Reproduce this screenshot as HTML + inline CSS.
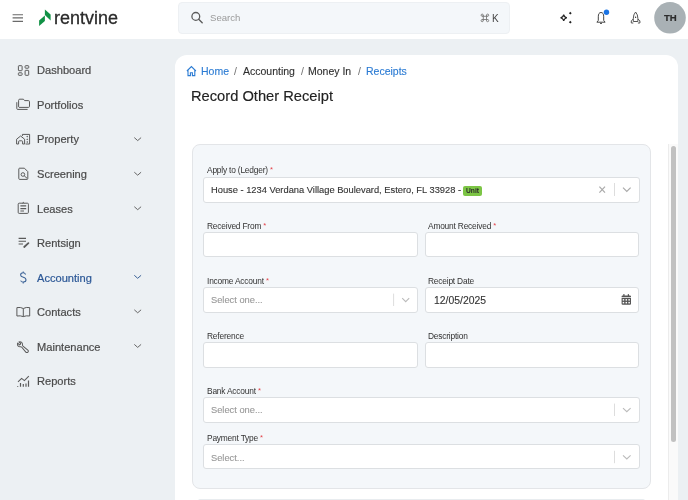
<!DOCTYPE html>
<html><head><meta charset="utf-8">
<style>
*{margin:0;padding:0;box-sizing:border-box}
html,body{width:688px;height:500px;overflow:hidden}
body{background:#ecf0f3;font-family:"Liberation Sans",sans-serif;position:relative;color:#333}
.a{position:absolute;white-space:nowrap;line-height:1}
.nav,.a,.lbl,.txt{will-change:transform;z-index:4}
#hdr{position:absolute;left:0;top:0;width:688px;height:39px;background:#fff}
#search{position:absolute;left:178.3px;top:2px;width:331.7px;height:31.8px;background:#f4f7fa;border:1px solid #edf0f3;border-radius:4px}
.nav{position:absolute;left:36.6px;font-size:11.1px;line-height:1;color:#4a4a4a;-webkit-text-stroke:0.2px #4a4a4a}
.ico{position:absolute;left:0;top:0;z-index:3}
.chev{position:absolute;left:134px}
#card{position:absolute;left:175px;top:55px;width:503px;height:460px;background:#fff;border-radius:12px 12px 0 0}
#panel{position:absolute;left:192px;top:144.3px;width:459px;height:344.7px;background:#f4f7fa;border:1px solid #e3e5e8;border-radius:8px}
.inp{position:absolute;background:#fff;border:1px solid #dcdfe2;border-radius:3px;height:25.3px}
.lbl{position:absolute;font-size:8.4px;letter-spacing:-0.2px;line-height:1;color:#333;white-space:nowrap}
.lbl i{font-style:normal;color:#e3434a;font-size:7.6px;position:relative;top:-0.6px}
.txt{position:absolute;font-size:10px;line-height:1;white-space:nowrap;-webkit-text-stroke:0.12px currentColor}
</style></head><body>
<div id="hdr"></div>
<!-- hamburger -->
<svg class="ico" width="40" height="39" style="left:0;top:0">
<path d="M12.6 14.7H23M12.6 17.9H23M12.6 21.3H23" stroke="#6a6a6a" stroke-width="1.15"/>
</svg>
<!-- logo leaf -->
<svg class="ico" width="60" height="39">
<path d="M44.9 9.6L50.6 14.4L50.6 20.4L44.9 15.1Z" fill="#119145"/>
<path d="M44.9 15.4L44.9 20.9L39.1 25.9L39.1 20.6Z" fill="#119145"/>
</svg>
<div class="a" style="left:53.8px;top:9.2px;font-size:18px;color:#2b2b2b;transform:scaleY(1.04);transform-origin:0 15px;-webkit-text-stroke:0.3px #2b2b2b">rentvine</div>
<div id="search"></div>
<svg class="ico" width="688" height="39">
<circle cx="195.8" cy="16.4" r="3.9" fill="none" stroke="#5c5c5c" stroke-width="1.3"/>
<path d="M198.7 19.3L202.2 22.7" stroke="#5c5c5c" stroke-width="1.4" stroke-linecap="round"/>
</svg>
<div class="a" style="left:210.3px;top:12.9px;font-size:9.6px;color:#9a9a9a">Search</div>
<svg class="ico" width="688" height="39" fill="none" stroke="#7a7a7a" stroke-width="0.9">
<path d="M483.3 15.2V20.6M486.5 15.2V20.6M482.2 16.3H487.6M482.2 19.5H487.6"/>
<circle cx="482.2" cy="15.2" r="1.1"/><circle cx="487.6" cy="15.2" r="1.1"/><circle cx="482.2" cy="20.6" r="1.1"/><circle cx="487.6" cy="20.6" r="1.1"/>
</svg>
<div class="a" style="left:492.3px;top:14px;font-size:10px;color:#444">K</div>
<!-- right icons -->
<svg class="ico" width="688" height="39">
<path d="M563.7 14.6Q564.2 17.3 566.9 17.8Q564.2 18.3 563.7 21Q563.2 18.3 560.5 17.8Q563.2 17.3 563.7 14.6Z" fill="none" stroke="#222" stroke-width="1.1"/>
<path d="M570.3 11.8L571.7 13.2L570.3 14.6L568.9 13.2Z" fill="#222"/>
<path d="M570.3 20.8L571.7 22.2L570.3 23.6L568.9 22.2Z" fill="#222"/>
<path d="M598.3 20.4V16.8Q598.3 12.5 601 12.5Q603.7 12.5 603.7 16.8V20.4L605.1 22.2H596.9Z" fill="none" stroke="#444" stroke-width="1" stroke-linejoin="round"/>
<path d="M600 23.1Q601 24.3 602 23.1" fill="none" stroke="#444" stroke-width="1"/>
<circle cx="606.5" cy="12.2" r="2.7" fill="#1b74e4"/>
<path d="M635.6 12Q633.3 14.5 633.3 18.5V21.5H637.9V18.5Q637.9 14.5 635.6 12Z" fill="none" stroke="#555" stroke-width="1"/>
<path d="M633.3 19L631.3 20.8V23H633.3M637.9 19L639.9 20.8V23H637.9" fill="none" stroke="#555" stroke-width="1"/>
<circle cx="635.6" cy="17.3" r="0.7" fill="#333"/>
<circle cx="670" cy="17.8" r="15.8" fill="#a9b1b5"/>
</svg>
<div class="a" style="left:663.6px;top:13px;font-size:9.6px;font-weight:bold;color:#2c2c2c;-webkit-text-stroke:0.2px #2c2c2c">TH</div>

<!-- sidebar -->
<svg class="ico" width="175" height="500" fill="none" stroke="#5a5a5a" stroke-width="1">
<!-- dashboard -->
<rect x="18.4" y="65.7" width="3.7" height="5" rx="0.6"/>
<rect x="25.1" y="65.7" width="3.6" height="2.5" rx="0.6"/>
<rect x="18.4" y="72.8" width="3.7" height="2.5" rx="0.6"/>
<rect x="25.1" y="70.3" width="3.6" height="5" rx="0.6"/>
<!-- portfolios -->
<path d="M18.6 106.9V100.4Q18.6 99.2 19.8 99.2H23.4L24.6 100.6H28.4Q29.5 100.6 29.5 101.7V106.3Q29.5 107.4 28.4 107.4H19.1Z"/>
<path d="M16.8 102.2V108.6Q16.8 109.4 17.6 109.4H27.6"/>
<!-- property -->
<path d="M16.6 144V139.2L20.6 136L24.6 139.2V144H22.6V141.6Q22.6 140.8 21.8 140.8H19.4Q18.6 140.8 18.6 141.6V144Z"/>
<path d="M22.4 136V134.4H29.6V144H25.6"/>
<circle cx="27.2" cy="136.6" r=".35" fill="#555"/><circle cx="27.2" cy="139.3" r=".35" fill="#555"/><circle cx="27.2" cy="142" r=".35" fill="#555"/>
<!-- screening -->
<path d="M24.4 168.2H19.6Q18.8 168.2 18.8 169V178.6Q18.8 179.4 19.6 179.4H27Q27.8 179.4 27.8 178.6V171.6Z"/>
<circle cx="22.9" cy="174.5" r="1.8"/>
<path d="M24.2 175.8L27.2 178.4"/>
<!-- leases -->
<rect x="18.2" y="203.2" width="10.2" height="10.2" rx="1"/>
<path d="M22.4 203.2Q23.3 201.6 24.2 203.2"/>
<path d="M20.4 205.8H26.2M20.4 208.6H26.2M20.4 211H24" stroke-width="1.2"/>
<!-- rentsign -->
<path d="M18.6 238.4H26M18.6 241.2H26M18.6 244H23" stroke-width="1.1"/>
<path d="M24.2 247L28.4 243.2" stroke-width="1.8" stroke-linecap="round"/>
<!-- contacts -->
<path d="M23.3 308.5Q20.5 306.9 16.9 307.6V316Q20.5 315.4 23.3 316.6Q26.1 315.4 29.7 316V307.6Q26.1 306.9 23.3 308.5ZM23.3 308.5V316.6"/>
<!-- maintenance -->
<g transform="translate(29.6,340.4) scale(-0.56,0.56)" stroke-width="1.8" stroke-linecap="round" stroke-linejoin="round"><path d="M21.75 6.75a4.5 4.5 0 0 1-4.884 4.484c-1.076-.091-2.264.071-2.95.904l-7.152 8.684a2.548 2.548 0 1 1-3.586-3.586l8.684-7.152c.833-.686.995-1.874.904-2.95a4.5 4.5 0 0 1 6.336-4.486l-3.276 3.276a3.004 3.004 0 0 0 2.25 2.25l3.276-3.276c.271.587.422 1.24.422 1.929Z"/></g>
<!-- reports -->
<path d="M18 381.8L21.6 378.4L24.4 380.6L28.8 376.2" stroke-width="1.1"/>
<path d="M17.7 386.8V386M20.5 386.8V383M23.3 386.8V384M26 386.8V383.5M28.5 386.8V380.5" stroke-width="1.2"/>
</svg>
<svg class="ico" width="175" height="500" fill="none" stroke="#3a6196" stroke-width="1.05">
<path d="M25.6 274.4Q24.8 272.8 23.1 272.8Q20.6 272.8 20.6 274.9Q20.6 276.6 23.3 277.3Q26 278 26 280.1Q26 282.1 23.3 282.1Q21.3 282.1 20.6 280.6M23.2 271.5V272.8M23.2 282.1V283.4"/>
</svg>
<svg class="ico" width="175" height="500" fill="none" stroke="#666" stroke-width="1">
<path d="M134.3 137.6L137.7 140.6L141.1 137.6"/>
<path d="M134.3 172.2L137.7 175.2L141.1 172.2"/>
<path d="M134.3 206.7L137.7 209.7L141.1 206.7"/>
<path d="M134.3 309.8L137.7 312.8L141.1 309.8"/>
<path d="M134.3 344.4L137.7 347.4L141.1 344.4"/>
</svg>
<svg class="ico" width="175" height="500" fill="none" stroke="#3a6196" stroke-width="1">
<path d="M134.3 275.3L137.7 278.3L141.1 275.3"/>
</svg>
<div class="nav" style="top:65.4px">Dashboard</div>
<div class="nav" style="top:99.9px">Portfolios</div>
<div class="nav" style="top:134.4px">Property</div>
<div class="nav" style="top:169.0px">Screening</div>
<div class="nav" style="top:203.6px">Leases</div>
<div class="nav" style="top:238.1px">Rentsign</div>
<div class="nav" style="top:272.7px;color:#2b5796;-webkit-text-stroke:0.2px #2b5796">Accounting</div>
<div class="nav" style="top:307.2px">Contacts</div>
<div class="nav" style="top:341.8px">Maintenance</div>
<div class="nav" style="top:376.3px">Reports</div>

<!-- card -->
<div id="card"></div>
<svg class="ico" width="688" height="500" fill="none" stroke="#2b7bd3" stroke-width="1.1">
<path d="M186.9 71L191.4 66.6L195.9 71M188 70V75.6H190.4V72.8H192.4V75.6H194.8V70"/>
</svg>
<div class="a" style="left:200.9px;top:66.2px;font-size:10.5px;color:#2b7bd3;-webkit-text-stroke:0.12px #2b7bd3">Home</div>
<div class="a" style="left:234px;top:66.6px;font-size:10.4px;color:#707070">/</div>
<div class="a" style="left:243px;top:66.2px;font-size:10.5px;color:#2f2f2f;-webkit-text-stroke:0.12px #2f2f2f">Accounting</div>
<div class="a" style="left:301px;top:66.6px;font-size:10.4px;color:#707070">/</div>
<div class="a" style="left:308px;top:66.2px;font-size:10.5px;color:#2f2f2f;-webkit-text-stroke:0.12px #2f2f2f">Money In</div>
<div class="a" style="left:358px;top:66.6px;font-size:10.4px;color:#707070">/</div>
<div class="a" style="left:365.7px;top:66.2px;font-size:10.5px;color:#2b7bd3;-webkit-text-stroke:0.12px #2b7bd3">Receipts</div>
<div class="a" style="left:190.6px;top:88.6px;font-size:14.7px;color:#222;-webkit-text-stroke:0.15px #222">Record Other Receipt</div>

<div id="panel"></div>
<!-- row 1 -->
<div class="lbl" style="left:207px;top:166.4px">Apply to (Ledger) <i>*</i></div>
<div class="inp" style="left:203.4px;top:177.3px;width:436.4px"></div>
<div class="txt" style="left:211px;top:185.9px;font-size:9.32px;color:#333">House - 1234 Verdana Village Boulevard, Estero, FL 33928 - </div>
<div class="a" style="left:463.3px;top:185.5px;width:19px;height:10px;background:#7cc545;border-radius:2px"></div>
<div class="a" style="left:466.1px;top:187.8px;font-size:6.7px;font-weight:bold;color:#2a2a2a">Unit</div>
<svg class="ico" width="688" height="500" fill="none" stroke="#aaa" stroke-width="1.2">
<path d="M599.4 186.6L605 192.6M605 186.6L599.4 192.6"/>
<path d="M614.5 183V196" stroke="#ddd" stroke-width="1"/>
<path d="M623 187.6L626.8 191.4L630.6 187.6"/>
</svg>
<!-- row 2 -->
<div class="lbl" style="left:207px;top:221.5px">Received From <i>*</i></div>
<div class="lbl" style="left:428.3px;top:221.5px">Amount Received <i>*</i></div>
<div class="inp" style="left:203.4px;top:232.2px;width:214.5px"></div>
<div class="inp" style="left:424.7px;top:232.2px;width:214.6px"></div>
<!-- row 3 -->
<div class="lbl" style="left:207px;top:276.7px">Income Account <i>*</i></div>
<div class="lbl" style="left:428.3px;top:276.7px">Receipt Date</div>
<div class="inp" style="left:203.4px;top:287.4px;width:214.5px"></div>
<div class="inp" style="left:424.7px;top:287.4px;width:214.6px"></div>
<div class="txt" style="left:211px;top:296.2px;font-size:9.3px;color:#999">Select one...</div>
<div class="txt" style="left:434.3px;top:296.2px;font-size:10.4px;color:#333">12/05/2025</div>
<svg class="ico" width="688" height="500" fill="none" stroke="#bbb" stroke-width="1.1">
<path d="M393.6 293.6V306" stroke="#ddd" stroke-width="1"/>
<path d="M402.2 298.2L405.7 301.7L409.2 298.2"/>
<path d="M614.5 403.6V416" stroke="#ddd" stroke-width="1"/>
<path d="M623 408.2L626.8 411.7L630.6 408.2"/>
<path d="M614.5 450.8V463.2" stroke="#ddd" stroke-width="1"/>
<path d="M623 455.4L626.8 458.9L630.6 455.4"/>
</svg>
<svg class="ico" width="688" height="500">
<rect x="623.3" y="293.9" width="1.2" height="2.6" rx=".5" fill="#555"/>
<rect x="627.8" y="293.9" width="1.2" height="2.6" rx=".5" fill="#555"/>
<path d="M621.6 297.2V296.6Q621.6 295.5 622.7 295.5H629.9Q631 295.5 631 296.6V297.2Z" fill="#555"/>
<path d="M621.6 297.9H631V303.7Q631 304.8 629.9 304.8H622.7Q621.6 304.8 621.6 303.7Z" fill="#555"/>
<g fill="#fff"><rect x="622.7" y="299.1" width="1.5" height="1.5"/><rect x="625.55" y="299.1" width="1.5" height="1.5"/><rect x="628.4" y="299.1" width="1.5" height="1.5"/><rect x="622.7" y="301.9" width="1.5" height="1.5"/><rect x="625.55" y="301.9" width="1.5" height="1.5"/><rect x="628.4" y="301.9" width="1.5" height="1.5"/></g>
</svg>
<!-- row 4 -->
<div class="lbl" style="left:207px;top:331.7px">Reference</div>
<div class="lbl" style="left:428.3px;top:331.7px">Description</div>
<div class="inp" style="left:203.4px;top:342.4px;width:214.5px"></div>
<div class="inp" style="left:424.7px;top:342.4px;width:214.6px"></div>
<!-- row 5 -->
<div class="lbl" style="left:207px;top:386.7px">Bank Account <i>*</i></div>
<div class="inp" style="left:203.4px;top:397.4px;width:436.4px"></div>
<div class="txt" style="left:211px;top:406.2px;font-size:9.3px;color:#999">Select one...</div>
<!-- row 6 -->
<div class="lbl" style="left:207px;top:433.9px">Payment Type <i>*</i></div>
<div class="inp" style="left:203.4px;top:444.2px;width:436.4px"></div>
<div class="txt" style="left:211px;top:453.6px;font-size:9.3px;color:#999">Select...</div>
<!-- bottom line -->
<div class="a" style="left:198px;top:498.5px;width:447px;height:1.5px;border-top:1px solid #e8ecef;border-radius:8px 8px 0 0"></div>
<!-- scrollbar -->
<div class="a" style="left:668px;top:144px;width:10px;height:356px;background:#fafafa;border-left:1px solid #ececec"></div>
<div class="a" style="left:671px;top:145.6px;width:5.2px;height:296px;background:#c1c1c1;border-radius:3px"></div>
</body></html>
